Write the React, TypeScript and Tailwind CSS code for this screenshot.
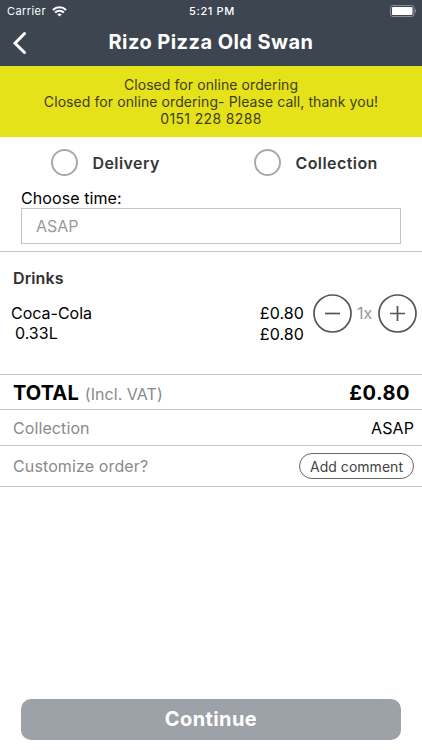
import React from "react";

function StatusBar() {
  return (
    <div className="grid h-[22px] grid-cols-3 items-center pl-[7px] pr-[5px] text-[11px] leading-[22px]">
      <div className="flex items-center gap-[6px]">
        <span className="tracking-[0.42px]">Carrier</span>
        <svg width="15" height="11" viewBox="0 0 15 11" fill="none" stroke="white" strokeWidth="2.1">
          <path d="M.9 3.9C4.7.3 10.3.3 14.1 3.9" />
          <path d="M3.1 6.5C5.6 4.1 9.4 4.1 11.9 6.5" />
          <path d="M7.5 10.6 5.2 8.3C6.5 7.1 8.5 7.1 9.8 8.3Z" fill="white" stroke="none" />
        </svg>
      </div>
      <span className="text-center font-medium tracking-[0.65px]">5:21 PM</span>
      <svg className="justify-self-end" width="27" height="12" viewBox="0 0 27 12">
        <rect x=".5" y=".5" width="23.5" height="11" rx="2.5" fill="none" stroke="#8b9098" />
        <rect x="2" y="2" width="20.5" height="8" rx="1" fill="white" />
        <path d="M25 4c1.5.5 1.5 3.5 0 4Z" fill="#8b9098" />
      </svg>
    </div>
  );
}

function Header() {
  return (
    <header className="h-[66px] bg-[#3d4551] text-white">
      <StatusBar />
      <div className="grid h-10 grid-cols-[40px_1fr_40px] items-center">
        <svg className="ml-[12px]" width="16" height="24" viewBox="0 0 16 24" fill="none" stroke="white" strokeWidth="3" strokeLinecap="round">
          <path d="M12.5 3.5 3 13.3l9.5 9.2" />
        </svg>
        <h1 className="text-center text-[20px] font-bold leading-[40px] tracking-[0.44px]">Rizo Pizza Old Swan</h1>
      </div>
    </header>
  );
}

function Option({ label }: { label: string }) {
  return (
    <label className="flex items-center gap-[15px]">
      <span className="size-[27px] rounded-full border-2 border-[#a9a9a9]" />
      <span className="text-[16px] font-semibold leading-5 tracking-[0.42px] text-[#363636]">{label}</span>
    </label>
  );
}

function RoundButton({ plus = false }: { plus?: boolean }) {
  return (
    <button className="flex size-[39px] items-center justify-center">
      <svg width="39" height="39" viewBox="0 0 39 39" fill="none" stroke="#555" strokeWidth="1.7">
        <circle cx="19.5" cy="19.5" r="18.5" />
        <path d={plus ? "M12 19.5h15M19.5 12v15" : "M12 19.5h15"} />
      </svg>
    </button>
  );
}

export default function App() {
  return (
    <main className="flex h-[750px] w-[422px] flex-col overflow-hidden bg-white font-['Inter',sans-serif] text-[16px] text-black">
      <Header />
      <div className="h-[71px] bg-[#e6e21a] pt-[10px] text-center text-[14px] leading-[17px] tracking-[0.08px] text-[#3f3d1c]">
        <p>Closed for online ordering</p>
        <p>Closed for online ordering- Please call, thank you!</p>
        <p className="tracking-[0.36px]">0151 228 8288</p>
      </div>
      <section className="h-[115px] border-b border-[#c4c4c4]">
        <div className="grid h-[51px] grid-cols-[203px_1fr] pl-[50.5px]">
          <Option label="Delivery" />
          <Option label="Collection" />
        </div>
        <div className="px-[21px]">
          <p className="h-5 leading-5 tracking-[0.08px]">Choose time:</p>
          <div className="flex h-9 items-center border border-[#c4c4c4] pl-[14px] text-[#999]">ASAP</div>
        </div>
      </section>
      <section className="h-[123px] border-b border-[#c4c4c4] pt-4">
        <h2 className="pl-[13px] font-semibold leading-5 tracking-[0.1px] text-[#303030]">Drinks</h2>
        <div className="flex pt-[5px]">
          <div className="flex-1 pl-[11px] pt-[10px] leading-5">
            <p>Coca-Cola</p>
            <p className="pl-1">0.33L</p>
          </div>
          <div className="pt-[10px] text-right leading-[21px] tracking-[0.1px]">
            <p>£0.80</p>
            <p>£0.80</p>
          </div>
          <div className="ml-[9px] mr-[5px] flex h-10 items-center">
            <RoundButton />
            <span className="w-[26px] pr-px text-center text-[#999]">1x</span>
            <RoundButton plus />
          </div>
        </div>
      </section>
      <div className="flex h-[35px] items-center justify-between border-b border-[#c4c4c4] pl-[13px] pr-3 pt-[2px]">
        <div className="flex items-baseline gap-[6px]">
          <span className="text-[20px] font-bold tracking-[0.1px]">TOTAL</span>
          <span className="tracking-[0.05px] text-[#8a8a8a]">(Incl. VAT)</span>
        </div>
        <span className="text-[20px] font-bold tracking-[0.5px]">£0.80</span>
      </div>
      <div className="flex h-9 items-center justify-between border-b border-[#c4c4c4] pl-[13px] pr-2">
        <span className="tracking-[0.1px] text-[#8a8a8a]">Collection</span>
        <span className="tracking-[0.1px]">ASAP</span>
      </div>
      <div className="flex h-[41px] items-center justify-between border-b border-[#c4c4c4] pl-[13px] pr-2">
        <span className="tracking-[0.12px] text-[#8a8a8a]">Customize order?</span>
        <button className="h-[26px] w-[115px] rounded-full border border-[#666] text-[14px] tracking-[0.04px] text-[#444]">Add comment</button>
      </div>
      <button className="mx-[21px] mb-[10px] mt-auto h-[41px] rounded-[10px] bg-[#9da1a8] pb-px text-[20px] font-bold leading-5 tracking-[0.4px] text-white">Continue</button>
    </main>
  );
}
